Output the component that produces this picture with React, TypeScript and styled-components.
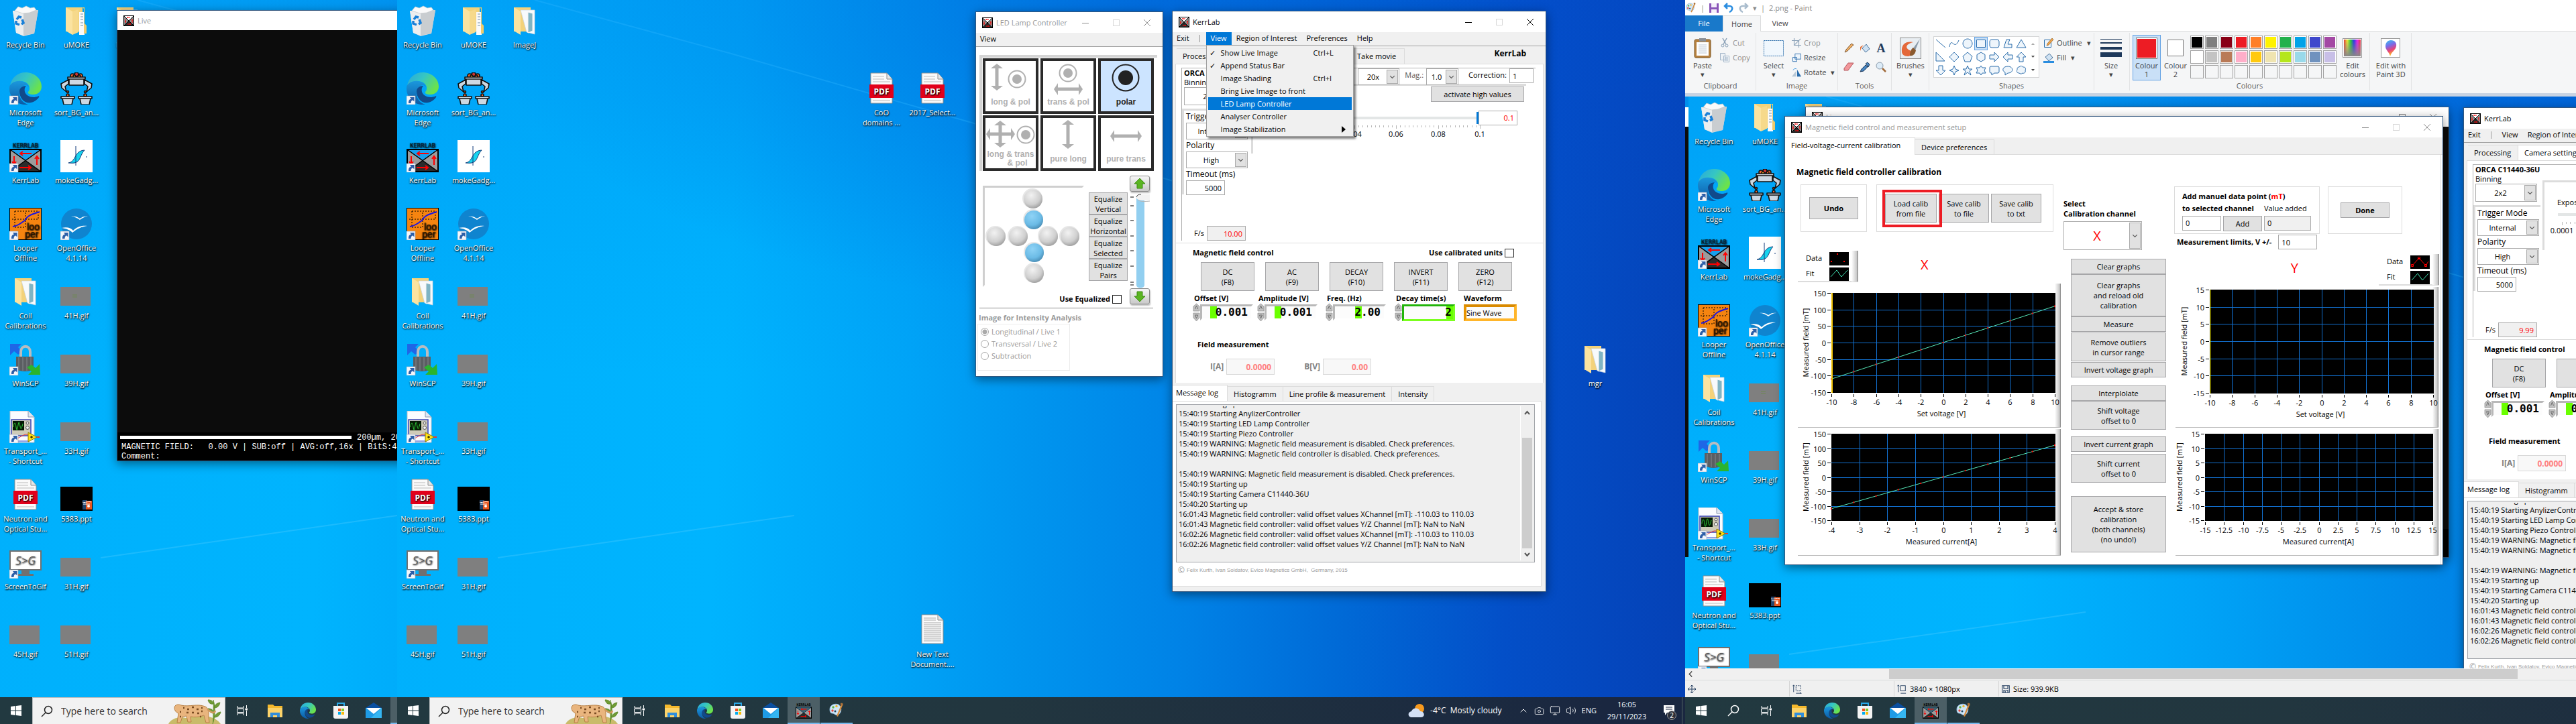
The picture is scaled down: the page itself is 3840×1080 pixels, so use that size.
import React, { ReactNode } from 'react';
import styled, { createGlobalStyle, css } from 'styled-components';
import { ChevronUp, Volume2, Monitor, Camera } from 'lucide-react';

/* ---------- base ---------- */

const ui = '"Open Sans", "Noto Sans", sans-serif';
const mono = '"Liberation Mono", monospace';
const digits = '"DejaVu Sans Mono", monospace';

const Global = createGlobalStyle`
  * { box-sizing: border-box; }
  html, body, #root { margin: 0; height: 100%; }
  body { font: 11px/14px ${ui}; color: #000; overflow: hidden; }
  button, input, select { font: inherit; color: inherit; margin: 0; padding: 0; border-radius: 0; }
  button { white-space: pre; cursor: default; }
  svg { display: block; flex: none; }
  fieldset { margin: 0; padding: 0; border: 0; min-width: 0; }
  h2, h3, p, ul { margin: 0; padding: 0; font: inherit; list-style: none; }
`;

const Screens = styled.main`
  display: grid;
  grid-template-columns: 592px 1920px minmax(0, 1fr);
  height: 100vh;
  min-height: 1080px;
`;

const Screen = styled.section`
  display: flex;
  flex-direction: column;
  min-width: 0;
  overflow: hidden;
`;

const wallpaper = css`
  background:
    radial-gradient(ellipse 1000px 460px at 58% 0, rgba(0, 60, 195, 0.34), rgba(0, 60, 195, 0)) 0 0 / 1920px 1080px,
    linear-gradient(180deg, rgba(0, 90, 220, 0.16) 0, rgba(0, 90, 220, 0) 560px) 0 0 / 1920px 1080px,
    linear-gradient(93deg, #00b0fc 0, #00b4fe 26%, #00a4f7 40%, #0094ee 50%, #0082e6 62%, #0069d6 74%, #034fc8 86%, #0541b6 100%) 0 0 / 1920px 1080px;
`;

const DesktopArea = styled.div`
  position: relative;
  flex: 1;
  min-height: 0;
  overflow: hidden;
  ${wallpaper}
`;

const Beams = styled.svg`
  position: absolute;
  inset: 0;
`;

const IconGrid = styled.div`
  position: relative;
  display: grid;
  grid-template-columns: repeat(auto-fill, 76px);
  grid-auto-rows: 101px;
`;

const DesktopIcon = styled.button<{ $col: number; $row: number }>`
  grid-column: ${(p) => p.$col};
  grid-row: ${(p) => p.$row};
  display: flex;
  flex-direction: column;
  align-items: center;
  gap: 4px;
  padding-top: 7px;
  border: 0;
  background: none;
  color: #fff;
  line-height: 15px;
  text-shadow: 1px 1px 2px #000, 0 1px 2px rgba(0, 0, 0, 0.7);
`;

/* ---------- drawings ---------- */

const Shortcut = () => (
  <g>
    <rect x="0" y="35" width="13" height="13" fill="#f4f6fa" stroke="#9aa6b8" strokeWidth=".6" />
    <path d="M3 46c0-4 1-6 4-6.500l-2-2.500h6.500v6.500l-2-2c-2 0-3 2-3 4.500z" fill="#2d5fa8" />
  </g>
);

const EdgeShape = () => (
  <>
    <defs>
      <linearGradient id="edgeA" x1="0" y1="0" x2="1" y2=".5">
        <stop offset="0" stopColor="#2aa7dc" /><stop offset=".5" stopColor="#35c6c4" /><stop offset="1" stopColor="#6be24c" />
      </linearGradient>
      <linearGradient id="edgeB" x1="0" y1="0" x2="0" y2="1">
        <stop offset="0" stopColor="#1b98dd" /><stop offset="1" stopColor="#0c59a4" />
      </linearGradient>
    </defs>
    <path d="M1 20C3 7 13 0 24 0c14 0 24 10 24 21 0 8-6 12-12 12-7 0-9-2-8-4 2-2 2-4 2-6 0-6-7-10-13-10C10 13 4 16 1 20z" fill="url(#edgeA)" />
    <path d="M1 19c4-5 10-7 16-6 7 1 12 5 12 10 0-2-3-4-5-4-5 1-9 6-9 13 0 8 6 14 13 16-16 2-28-10-28-24 0-2 0-3 1-5z" fill="url(#edgeB)" />
    <path d="M15 28c0 11 8 19 17 17 6-1 10-5 12-8 1-1 0-2-1-1.500C35 39 25 36 23 29c-1-4 0-7 2-9-6 0-10 4-10 8z" fill="#114a8b" />
  </>
);

const KerrShape = () => (
  <>
    <rect x="1" y="14" width="46" height="33" fill="#9c9c9c" />
    <path d="M1 14h46L24 31z" fill="#18a0ee" />
    <path d="M1 47h46L24 31z" fill="#2b2b2b" />
    <path d="M1 14l46 33M47 14L1 47" stroke="#000" strokeWidth="1.500" />
    <rect x="1" y="14" width="46" height="33" fill="none" stroke="#000" strokeWidth="2" />
    <path d="M33 20H17m3-3-4 3 4 3M7 24v11m-3-3 3 4 3-4M41 37V26m-3 2 3-4 3 4M15 41h16m-3-3 4 3-4 3" stroke="#f00" strokeWidth="2" fill="none" />
  </>
);

const FolderShape = ({ papers }: { papers?: boolean }) => (
  <>
    <path d="M8 4h25v36H8z" fill="#f3d27a" />
    {papers ? (
      <>
        <path d="M18 8h21v36l-12-3z" fill="#f8fafc" stroke="#c9d3dc" strokeWidth=".7" />
        <path d="M29 11l7 2v26l-7 3z" fill="#7fb4c4" stroke="#f5f5f5" />
      </>
    ) : (
      <>
        <path d="M28 11h8v34h-8z" fill="#fafafa" />
        <path d="M30 14h4m-4 4h4m-4 4h4m-4 5h4m-4 4h4" stroke="#7791a8" />
        <path d="M33 4h3l0 24 3 3v12h-4V6z" fill="#f0cb6b" />
      </>
    )}
    <path d="M8 4l10 6v35L8 39z" fill="#fbe3a0" />
    {!papers && <path d="M18 10l9-3v34l-9 4z" fill="#f6d98b" />}
  </>
);

const gray = <rect x="0" y="17" width="45" height="28" fill="#7f7f7f" />;

const pictures: Record<string, ReactNode> = {
  bin: (
    <>
      <path d="M5 9l38-1-6 35-16 4-11-5z" fill="#d9dcde" />
      <path d="M5 9l16 3 0 34-11-4z" fill="#eceeef" />
      <path d="M43 8l-22 4 0 34 16-3z" fill="#c9cdd0" />
      <path d="M8 9l5-6 6 2 6-3 6 3 6-1 3 4-10 4-10 1z" fill="#fafafa" stroke="#c4c8ca" strokeWidth=".7" />
      <path d="M11 22l3-4 4 1M19 22l2 5-3 2M15 30l-5-2 0-4" stroke="#1a80d8" strokeWidth="3.500" fill="none" />
    </>
  ),
  folder: <FolderShape />,
  papers: <FolderShape papers />,
  edge: (<><EdgeShape /><Shortcut /></>),
  sort: (
    <g stroke="#111" strokeWidth="1.600" strokeLinejoin="round">
      <g fill="#f0662b">
        <circle cx="18" cy="5" r="3" /><circle cx="24" cy="3" r="3" fill="#d13434" /><circle cx="30" cy="5" r="3" /><circle cx="21" cy="6" r="2" fill="#f5a623" /><circle cx="28" cy="6" r="2" />
        <circle cx="11" cy="29" r="1.500" /><circle cx="37" cy="29" r="1.500" /><circle cx="11" cy="34" r="2" /><circle cx="37" cy="34" r="2" />
      </g>
      <path d="M11 7h26v3H11zM13 10h22v9H13zM12 11L1 17l1 6 7 6-2-8 5-4zM36 11l11 6-1 6-7 6 2-8-5-4zM1 36h20v3H1zM3 39h16l-2 9H5zM27 36h20v3H27zM29 39h16l-2 9H31z" fill="#cdd8e2" />
    </g>
  ),
  kerr: (
    <>
      <text x="24" y="11" textAnchor="middle" fontFamily="DejaVu Sans Mono" fontSize="9" fill="#0b1a28">KERRLAB</text>
      <KerrShape /><Shortcut />
    </>
  ),
  moke: (
    <>
      <rect width="48" height="48" fill="#fff" />
      <path d="M12 34c12-2 8-18 24-19-6 6-6 15-12 18-4 2-8 1-12 1z" fill="#18d4ee" stroke="#123a7a" />
      <path d="M23 9v29M39 24v2" stroke="#123a7a" />
    </>
  ),
  looper: (
    <>
      <rect x=".5" y=".5" width="47" height="47" fill="#f58410" stroke="#000" />
      <path d="M8 5h35v12H3M8 5v24h16V5" stroke="#000" strokeDasharray="2 2" fill="none" />
      <path d="M5 28c8-1 10-4 18-9 4-8 12-10 22-13" stroke="#1d16e0" strokeWidth="2" fill="none" />
      <text x="26" y="33" fontFamily="Liberation Sans" fontSize="14" fill="#2a1500">loo</text>
      <text x="23" y="44" fontFamily="Liberation Sans" fontSize="14" fill="#2a1500">per</text>
      <Shortcut />
    </>
  ),
  office: (
    <>
      <circle cx="24" cy="24" r="23" fill="#0f84cf" />
      <path d="M16 13c5-1 9 0 13 3 4-3 8-4 12-3-5 0-8 2-12 5-4-3-8-5-13-5zM2 30c8-2 14 0 17 4 6-6 13-8 21-7-8 1-15 4-22 10-4-4-9-6-16-7z" fill="#fff" />
      <Shortcut />
    </>
  ),
  gif: gray,
  gifMark: (<>{gray}<path d="M18 29h7m-7 3h7" stroke="#6f8a52" /></>),
  winscp: (
    <>
      <path d="M1 1h17l-5 5 6 6-6 5-6-5-6 6z" fill="#1f66e6" />
      <path d="M17 22v-9c0-11 14-11 14 0v9" fill="none" stroke="#b9bcc0" strokeWidth="4" />
      <path d="M10 20h26v19c-8 4-18 4-26 0z" fill="#5b5e62" />
      <path d="M14 21v19M20 21v20M26 21v20M32 21v19" stroke="#85898d" />
      <path d="M46 47H28l5-5-7-6 7-4 6 5 6-6z" fill="#2bb42d" />
      <Shortcut />
    </>
  ),
  transport: (
    <>
      <path d="M1 0h27l9 9v38H1z" fill="#fbfcff" stroke="#b8bfcc" />
      <path d="M28 0v9h9" fill="#dfe6f2" stroke="#8a97ad" />
      <rect x="3" y="13" width="29" height="24" fill="#cfcbb8" stroke="#3c46b8" strokeWidth="1.500" />
      <rect x="5" y="15" width="17" height="14" fill="#051a05" />
      <path d="M6 24c1-8 3-8 4 0s2 4 3-3 2-4 3 2 2 4 4-4" stroke="#31d13b" fill="none" />
      <circle cx="27" cy="18" r="2" fill="#f5f5f5" stroke="#555" /><circle cx="27" cy="25" r="2.500" fill="#f5f5f5" stroke="#555" />
      <path d="M8 42c10-2 14-10 22-6" stroke="#e33" fill="none" /><path d="M12 45h18" stroke="#2846c8" />
      <path d="M28 32v14l13-7z" fill="#ffe11a" stroke="#8c7a00" /><path d="M31 39h4m-2-2v4" stroke="#000" /><path d="M41 39h4" stroke="#e33" strokeWidth="2" />
      <Shortcut />
    </>
  ),
  pdf: (
    <>
      <path d="M8 1h24l8 9v36H8z" fill="#fafafa" stroke="#8d8d8d" />
      <path d="M32 1v9h8" fill="#e6e6e6" stroke="#8d8d8d" />
      <path d="M11 6h17M11 10h17M11 14h26M11 42h26" stroke="#bbb" />
      <rect x="6" y="18" width="36" height="20" fill="#e2001a" />
      <text x="24" y="33" textAnchor="middle" fontFamily="Open Sans" fontWeight="700" fontSize="12" fill="#fff">PDF</text>
    </>
  ),
  ppt: (
    <>
      <rect y="12" width="48" height="36" fill="#000" />
      <rect x="33" y="32" width="7" height="14" fill="#23446c" /><rect x="38" y="33" width="9" height="13" fill="#e8551d" />
      <path d="M33 35c4 2 8-2 13 0M34 38h10" stroke="#fff" /><circle cx="42" cy="41" r="2" fill="#fff" />
    </>
  ),
  stg: (
    <>
      <rect x="1" y="7" width="46" height="28" fill="#fff" stroke="#707070" strokeWidth="2" />
      <text x="24" y="27" textAnchor="middle" fontFamily="Open Sans" fontStyle="italic" fontWeight="300" fontSize="17" fill="#444">S&gt;G</text>
      <path d="M18 36h12v5h6v3H13v-3h5z" fill="#707070" />
      <Shortcut />
    </>
  ),
  txt: (
    <>
      <path d="M8 1h24l8 8v35H8z" fill="#fbfbfb" stroke="#8d8d8d" />
      <path d="M32 1v8h8" fill="#e3e3e3" stroke="#8d8d8d" />
      <path d="M11 6h18M11 9h18M11 13h26M11 16h26M11 19h26M11 22h26M11 25h26M11 28h26M11 31h26M11 34h26M11 37h26M11 40h26" stroke="#a9a9a9" />
    </>
  ),
};

const Picture = ({ name }: { name: string }) => (
  <svg width="48" height="48" viewBox="0 0 48 48" aria-hidden="true">{pictures[name]}</svg>
);

type IconSpec = [label: string, picture: string, col: number, row: number];

const commonIcons: IconSpec[] = [
  ['Recycle Bin', 'bin', 1, 1],
  ['Microsoft\nEdge', 'edge', 1, 2],
  ['KerrLab', 'kerr', 1, 3],
  ['Looper\nOffline', 'looper', 1, 4],
  ['Coil\nCalibrations', 'papers', 1, 5],
  ['WinSCP', 'winscp', 1, 6],
  ['Transport_...\n- Shortcut', 'transport', 1, 7],
  ['Neutron and\nOptical Stu...', 'pdf', 1, 8],
  ['ScreenToGif', 'stg', 1, 9],
  ['45H.gif', 'gif', 1, 10],
  ['uMOKE', 'folder', 2, 1],
  ['sort_BG_an...', 'sort', 2, 2],
  ['mokeGadg...', 'moke', 2, 3],
  ['OpenOffice\n4.1.14', 'office', 2, 4],
  ['41H.gif', 'gifMark', 2, 5],
  ['39H.gif', 'gif', 2, 6],
  ['33H.gif', 'gif', 2, 7],
  ['5383.ppt', 'ppt', 2, 8],
  ['31H.gif', 'gif', 2, 9],
  ['51H.gif', 'gif', 2, 10],
  ['ImageJ', 'papers', 3, 1],
];

const farIcons: IconSpec[] = [
  ['CoO\ndomains ...', 'pdf', 10, 2],
  ['2017_Select...', 'pdf', 11, 2],
  ['New Text\nDocument....', 'txt', 11, 10],
  ['mgr', 'papers', 24, 6],
];

const Desktop = ({ extra = [], children }: { extra?: IconSpec[]; children?: ReactNode }) => (
  <DesktopArea>
    <Beams width="1920" height="1040" aria-hidden="true">
      <path d="M205 0L498 80 860 184 1143 266 1330 322" stroke="#2bb4ff" strokeOpacity=".35" strokeWidth="2" fill="none" />
      <path d="M150 832L592 769" stroke="#5cd0ff" strokeOpacity=".3" strokeWidth="2" fill="none" />
    </Beams>
    <IconGrid>
      {[...commonIcons, ...extra].map(([label, picture, col, row]) => (
        <DesktopIcon key={label} type="button" $col={col} $row={row}>
          <Picture name={picture} />
          <span>{label}</span>
        </DesktopIcon>
      ))}
    </IconGrid>
    {children}
  </DesktopArea>
);

/* ---------- window parts ---------- */

const WindowFrame = styled.section<{ $x: number; $y: number; $w: number; $h?: number; $bg?: string }>`
  position: absolute;
  left: ${(p) => p.$x}px;
  top: ${(p) => p.$y}px;
  width: ${(p) => p.$w}px;
  ${(p) => p.$h && `height: ${p.$h}px;`}
  display: flex;
  flex-direction: column;
  background: ${(p) => p.$bg ?? '#fff'};
  border: 1px solid #31567e;
  box-shadow: 0 4px 14px rgba(0, 0, 0, 0.45);
`;

const TitleBar = styled.header<{ $dim?: boolean; $h?: number }>`
  display: flex;
  align-items: center;
  flex: none;
  height: ${(p) => p.$h ?? 31}px;
  padding-left: 9px;
  background: #fff;
  color: ${(p) => (p.$dim ? '#999' : '#000')};
  h2 { flex: 1; padding-left: 5px; white-space: nowrap; }
`;

const Caption = styled.button`
  display: grid;
  place-items: center;
  width: 46px;
  height: 100%;
  border: 0;
  background: none;
`;

const AppGlyph = () => (
  <svg width="16" height="16" viewBox="0 0 16 16" aria-hidden="true">
    <rect width="16" height="16" fill="#8e8e8e" />
    <path d="M0 0h16L8 8z" fill="#fff" /><path d="M0 16h16L8 8z" fill="#2a2a2a" />
    <path d="M0 0l16 16M16 0L0 16" stroke="#000" />
    <rect x=".5" y=".5" width="15" height="15" fill="none" stroke="#000" />
    <path d="M10 3H5.500M3 6v5M13 11V6M6 13h5M6 2v2M2 9h2M12 7h2M10 12v2" stroke="#f00" />
  </svg>
);

const Title = ({ text, dim, h, max = '#d8d8d8' }: { text: string; dim?: boolean; h?: number; max?: string }) => {
  const ink = dim ? '#8a8a8a' : '#000';
  return (
    <TitleBar $dim={dim} $h={h}>
      <AppGlyph />
      <h2>{text}</h2>
      <Caption type="button" aria-label="Minimise"><svg width="10" height="10"><path d="M0 5.500h10" stroke={ink} /></svg></Caption>
      <Caption type="button" aria-label="Maximise"><svg width="10" height="10"><rect x=".5" y=".5" width="9" height="9" fill="none" stroke={max} /></svg></Caption>
      <Caption type="button" aria-label="Close"><svg width="10" height="10"><path d="M0 0l10 10M10 0L0 10" stroke={ink} /></svg></Caption>
    </TitleBar>
  );
};

const MenuBar = styled.nav`
  display: flex;
  flex: none;
  height: 21px;
  background: #f0f0f0;
  border-bottom: 1px solid #a0a0a0;
  > button:first-child { padding-left: 6px; }
`;

const MenuSlot = styled.div`
  position: relative;
`;

const MenuButton = styled.button<{ $open?: boolean }>`
  height: 20px;
  padding: 0 7px 2px;
  border: 0;
  background: ${(p) => (p.$open ? '#0078d7' : 'none')};
  color: ${(p) => (p.$open ? '#fff' : '#000')};
`;

const MenuRule = styled.span`
  width: 1px;
  height: 11px;
  margin: 4px 9px 0 8px;
  background: #999;
`;

const Dropdown = styled.ul`
  position: absolute;
  z-index: 5;
  left: 0;
  top: 19px;
  width: 220px;
  padding: 1px 2px 1px;
  background: #f0f0f0;
  border: 1px solid #a0a0a0;
  box-shadow: 3px 3px 3px rgba(0, 0, 0, 0.5);
`;

const DropItem = styled.button<{ $on?: boolean }>`
  display: grid;
  grid-template-columns: 17px 1fr 55px;
  align-items: center;
  width: 100%;
  height: 19px;
  padding: 0 2px;
  border: 0;
  text-align: left;
  background: ${(p) => (p.$on ? '#0078d7' : 'none')};
  color: ${(p) => (p.$on ? '#fff' : '#000')};
`;

const SubArrow = styled.svg`
  margin-left: auto;
  margin-right: 7px;
`;

const Push = styled.button<{ $w?: number; $h?: number; $bold?: boolean; $mt?: number }>`
  flex: none;
  ${(p) => p.$w && `width: ${p.$w}px;`}
  height: ${(p) => p.$h ?? 23}px;
  margin-top: ${(p) => p.$mt ?? 0}px;
  border: 1px solid #a6a6a8;
  background: #e1e1e1;
  line-height: 15px;
  font-weight: ${(p) => (p.$bold ? 700 : 400)};
`;

const Field = styled.input<{ $w: number; $h?: number; $red?: boolean; $gray?: boolean; $right?: boolean; $bold?: boolean; $pull?: number }>`
  flex: none;
  width: ${(p) => p.$w}px;
  height: ${(p) => p.$h ?? 22}px;
  padding: 0 4px;
  margin-left: ${(p) => p.$pull ?? 0}px;
  border: 1px solid #ababab;
  background: ${(p) => (p.$gray ? '#f0f0f0' : '#fff')};
  color: ${(p) => (p.$red ? '#f00' : '#000')};
  text-align: ${(p) => (p.$right ? 'right' : 'left')};
  font-weight: ${(p) => (p.$bold ? 700 : 400)};
  &:disabled { border-color: #d8d8d8; background: #f8f8f8; color: #ff8080; }
`;

const SelectBox = styled.div<{ $w: number; $h: number }>`
  display: grid;
  grid-template-columns: 1fr 17px;
  flex: none;
  width: ${(p) => p.$w}px;
  height: ${(p) => p.$h}px;
  padding: 1px;
  border: 1px solid #ababab;
  background: #fff;
  svg { grid-area: 1 / 2; width: 100%; height: 100%; background: #e1e1e1; border: 1px solid #ababab; pointer-events: none; }
  select { grid-area: 1 / 1 / 2 / 3; appearance: none; border: 0; background: none; padding-right: 17px; text-align: center; text-align-last: center; min-width: 0; }
`;

const BigSelect = styled(SelectBox)`
  select { color: #f00; font-size: 20px; }
`;

const Chevron = () => (
  <svg viewBox="0 0 16 20" aria-hidden="true"><path d="M4.500 8.500L8 12l3.500-3.500" fill="none" stroke="#555" strokeWidth="1.200" /></svg>
);

const Tick = styled.input`
  appearance: none;
  flex: none;
  width: 14px;
  height: 13px;
  border: 1px solid #222;
  background: #fff;
`;

const TickLabel = styled.label`
  display: flex;
  align-items: center;
  gap: 3px;
  font-weight: 700;
`;

const bevel = css`
  border-top: 3px solid #dcdcdc;
  border-left: 3px solid #dcdcdc;
`;

/* ---------- live view ---------- */

const LiveBody = styled.div`
  flex: 1;
  background: #0c0c0c;
`;

const LiveStatus = styled.div`
  flex: none;
  height: 42px;
  padding-left: 6px;
  background: #000;
  color: #fff;
  font: 12px/14px ${mono};
  white-space: pre;
`;

const ScaleRow = styled.div`
  display: flex;
  align-items: center;
  gap: 8px;
  height: 15px;
  margin-left: -2px;
  &::before { content: ''; width: 345px; height: 5px; background: #fff; }
`;

const LiveWindow = ({ bare }: { bare?: boolean }) => (
  <WindowFrame $x={174} $y={15} $w={960} $h={673} aria-label="Live">
    <Title text="Live" dim h={29} max="#8a8a8a" />
    <LiveBody />
    <LiveStatus>
      {!bare && (
        <>
          <ScaleRow>200µm, 20x</ScaleRow>
          <div>{'MAGNETIC FIELD:   0.00 V | SUB:off | AVG:off,16x | BitS:4.0'}</div>
          <div>Comment:</div>
        </>
      )}
    </LiveStatus>
  </WindowFrame>
);

/* ---------- LED lamp controller ---------- */

const LedBody = styled.div`
  padding: 12px 14px 1px 5px;
`;

const ModeGrid = styled.div`
  display: grid;
  grid-template-columns: repeat(3, 83px);
  gap: 2px 3px;
  width: 265px;
  padding: 1px 0 0 1px;
  border-top: 4px solid #d4d4d4;
  border-left: 4px solid #d4d4d4;
`;

const ModeButton = styled.button<{ $on?: boolean }>`
  display: flex;
  flex-direction: column;
  height: 83px;
  border: 4px solid #2a2a2a;
  background: ${(p) => (p.$on ? '#cce4ff' : '#fff')};
  color: ${(p) => (p.$on ? '#222' : '#b0b0b0')};
  font: 700 12px/13px "Liberation Sans", sans-serif;
  text-align: center;
  svg { overflow: visible; }
  span { width: 100%; margin: auto 0; }
`;

const ArrowV = ({ x, y1, y2 }: { x: number; y1: number; y2: number }) => (
  <path d={`M${x} ${y1}l9 7h-6.500V${y2 - 7}h6.500l-9 7-9-7h6.500V${y1 + 7}h-6.500z`} fill="currentColor" />
);
const ArrowH = ({ x1, x2, y }: { x1: number; x2: number; y: number }) => (
  <path d={`M${x1} ${y}l6-9v6.500H${x2 - 6}v-6.500l6 9-6 9v-6.500H${x1 + 6}v6.500z`} fill="currentColor" />
);
const Target = ({ x, y, big }: { x: number; y: number; big?: boolean }) => (
  <>
    <circle cx={x} cy={y} r={big ? 19.5 : 12.5} fill="none" stroke="currentColor" strokeWidth="2" />
    <circle cx={x} cy={y} r={big ? 11 : 7} fill="currentColor" />
  </>
);

const modes: [string, ReactNode][] = [
  ['long & pol', <><ArrowV x={17} y1={4} y2={44} /><Target x={47} y={27} /></>],
  ['trans & pol', <><Target x={37} y={18} /><ArrowH x1={16} x2={59} y={42} /></>],
  ['polar', <Target x={37} y={25} big />],
  ['long & trans\n      & pol', <><ArrowV x={22} y1={4} y2={44} /><ArrowH x1={1} x2={44} y={24} /><Target x={60} y={25} /></>],
  ['pure long', <ArrowV x={37} y1={3} y2={46} />],
  ['pure trans', <ArrowH x1={14} x2={61} y={27} />],
];

const LedRow = styled.div`
  display: grid;
  grid-template-columns: 217px 34px;
  margin: 7px 0 0 5px;
  gap: 2px;
`;

const LedPair = styled.div`
  display: flex;
  gap: 7px;
  padding-top: 15px;
`;

const EqStack = styled.div`
  display: flex;
  flex-direction: column;
  padding-top: 10px;
`;

const EqualRow = styled.div`
  display: flex;
  justify-content: flex-end;
  padding: 11px 10px 0 0;
`;

const Lift = styled.div`
  display: flex;
  flex-direction: column;
  justify-content: space-between;
`;

const LiftButton = styled.button`
  width: 30px;
  height: 24px;
  padding: 1px 5px;
  border: 1px solid #8a8a8a;
  border-radius: 3px;
  background: linear-gradient(#f6f6f6, #c9c9c9);
  box-shadow: 1px 2px 2px rgba(0, 0, 0, 0.25);
`;

const Group = styled.fieldset`
  margin-top: 5px;
  padding: 6px 4px 0 3px;
  border-top: 1px solid #888;
  color: #9a9a9a;
`;

const GroupTitle = styled.h3`
  font-weight: 700;
  line-height: 16px;
  margin-left: -4px;
`;

const RadioBox = styled.div`
  width: 138px;
  height: 70px;
  margin: 1px 0 0 -6px;
  padding: 2px 4px;
  border: 1px solid #ececec;
`;

const RadioLabel = styled.label`
  display: flex;
  align-items: center;
  gap: 4px;
  height: 18px;
`;

const Radio = styled.input`
  appearance: none;
  width: 12px;
  height: 12px;
  border: 1px solid #aaa;
  border-radius: 50%;
  &:checked { background: radial-gradient(#aaa 3px, #fff 4px); }
`;

const bulbs: [number, number, boolean][] = [
  [75, 20, false], [76, 51, true], [20, 76, false], [53, 76, false], [98, 76, false], [130, 76, false], [77, 100, true], [77, 131, false],
];

const BulbPanel = () => (
  <svg width="151" height="151" aria-label="Lamp layout">
    <defs>
      <radialGradient id="off" cx=".4" cy=".3" r=".8"><stop offset="0" stopColor="#f2f2f2" /><stop offset=".6" stopColor="#cfcfcf" /><stop offset="1" stopColor="#8f8f8f" /></radialGradient>
      <radialGradient id="on" cx=".4" cy=".3" r=".8"><stop offset="0" stopColor="#8fd3f6" /><stop offset=".6" stopColor="#6bbbe6" /><stop offset="1" stopColor="#3f7fa6" /></radialGradient>
    </defs>
    <path d="M0 0h151l-3 3H3v145l-3 3z" fill="#cfcfcf" />
    {bulbs.map(([x, y, on]) => (
      <g key={`${x}-${y}`}>
        <circle cx={x - 1} cy={y - 1} r="15" fill="#e6e6e6" />
        <circle cx={x} cy={y} r="14" fill={`url(#${on ? 'on' : 'off'})`} />
      </g>
    ))}
  </svg>
);

const GreenArrow = ({ down }: { down?: boolean }) => (
  <svg width="18" height="18" viewBox="0 0 18 18" aria-hidden="true">
    <path d={down ? 'M9 17L1 9h4V2h8v7h4z' : 'M9 1l8 8h-4v7H5V9H1z'} fill="#5bb522" stroke="#3b8a10" />
  </svg>
);

const LedWindow = () => (
  <WindowFrame $x={862} $y={17} $w={280} $h={545} aria-label="LED Lamp Controller">
    <Title text="LED Lamp Controller" dim />
    <MenuBar><MenuButton type="button">View</MenuButton></MenuBar>
    <LedBody>
      <ModeGrid>
        {modes.map(([label, art], i) => (
          <ModeButton key={label} type="button" $on={i === 2}>
            <svg width="75" height="47" aria-hidden="true">{art}</svg>
            <span>{label}</span>
          </ModeButton>
        ))}
      </ModeGrid>
      <LedRow>
        <div>
          <LedPair>
            <BulbPanel />
            <EqStack>
              {['Vertical', 'Horizontal', 'Selected', 'Pairs'].map((name) => (
                <Push key={name} type="button" $w={58} $h={33}>{`Equalize\n${name}`}</Push>
              ))}
            </EqStack>
          </LedPair>
          <EqualRow><TickLabel>Use Equalized<Tick type="checkbox" /></TickLabel></EqualRow>
        </div>
        <Lift>
          <LiftButton type="button" aria-label="Brighter"><GreenArrow /></LiftButton>
          <svg width="34" height="144" aria-hidden="true">
            <path d="M1 8h5M1 21h5M1 43h5M1 66h5M1 88h5M1 111h5M1 135h5M1 139h5" stroke="#000" />
            <path d="M10 8h12v131c0 6-12 6-12 0z" fill="#92cff0" />
            <path d="M10 9c1-4 4-5 8-5h12v9H20c-5 0-9-1-10-4z" fill="#f2f2f2" /><path d="M10 8c1-3 3-4 7-4" stroke="#444" fill="none" /><path d="M12 12c4 3 10 3 18 2" stroke="#b5b5b5" fill="none" />
          </svg>
          <LiftButton type="button" aria-label="Dimmer"><GreenArrow down /></LiftButton>
        </Lift>
      </LedRow>
      <Group disabled>
        <GroupTitle>Image for Intensity Analysis</GroupTitle>
        <RadioBox>
          {['Longitudinal / Live 1', 'Transversal / Live 2', 'Subtraction'].map((name, i) => (
            <RadioLabel key={name}><Radio type="radio" name="analysis" defaultChecked={i === 0} />{name}</RadioLabel>
          ))}
        </RadioBox>
      </Group>
    </LedBody>
  </WindowFrame>
);

/* ---------- KerrLab ---------- */

const TopTabs = styled.div`
  display: grid;
  grid-template-columns: 75px 1fr 80px 210px;
  flex: none;
  height: 26px;
  padding: 3px 0 0 6px;
`;

const TopTab = styled.button<{ $on?: boolean }>`
  border: 1px solid #dcdcdc;
  border-width: 1px 1px 0 0;
  padding-left: 9px;
  text-align: left;
  background: ${(p) => (p.$on ? '#fff' : '#f0f0f0')};
`;

const Brand = styled.strong`
  justify-self: end;
  padding: 1px 29px 0 0;
  font-size: 12px;
`;

const CameraPanel = styled.div`
  flex: none;
  height: 268px;
  margin: 0 3px 0 4px;
  padding: 5px 11px 3px 8px;
  border: 1px solid #dcdcdc;
  background: #fff;
`;

const CameraFrame = styled.div`
  display: grid;
  grid-template-columns: 100px minmax(0, 1fr);
  gap: 3px;
  height: 258px;
  border-top: 1px solid #b0b0b0;
  border-left: 1px solid #b0b0b0;
  white-space: nowrap;
`;

const Stack = styled.div<{ $pl?: number }>`
  display: flex;
  flex-direction: column;
  padding-left: ${(p) => p.$pl ?? 0}px;
`;

const Bold = styled.strong`
  font-weight: 700;
`;

const TriggerGroup = styled.div`
  ${bevel}
  display: flex;
  flex-direction: column;
  gap: 2px;
  height: 128px;
  margin-top: 5px;
  padding: 2px 0 0 3px;
  label { font-size: 12px; }
`;

const RateRow = styled.div`
  display: flex;
  align-items: center;
  gap: 4px;
  padding: 47px 0 0 18px;
`;

const OpticsRow = styled.div`
  display: flex;
  justify-content: flex-end;
  align-items: flex-start;
  gap: 4px;
  height: 23px;
  padding-right: 3px;
  label { line-height: 20px; margin-left: 4px; }
  label:nth-of-type(1) { color: #555; }
  label:nth-of-type(2) { margin-left: 11px; }
`;

const ExposureGroup = styled.div`
  ${bevel}
  width: 410px;
  height: 104px;
`;

const ExposureHead = styled.div`
  display: flex;
  justify-content: space-between;
  height: 37px;
  padding: 1px 3px 0 19px;
  label { align-self: flex-end; }
`;

const SliderRow = styled.div`
  display: flex;
  align-items: center;
  height: 21px;
  padding-left: 20px;
`;

const Slider = styled.input`
  appearance: none;
  width: 324px;
  height: 20px;
  background: linear-gradient(#e3e6e6, #e3e6e6) center / 100% 4px no-repeat;
  &::-webkit-slider-thumb { appearance: none; width: 11px; height: 18px; background: #0078d7; }
`;

const MagneticPanel = styled.div`
  flex: none;
  height: 208px;
  margin: 0 3px 0 4px;
  padding: 5px 0 0 25px;
  border: 1px solid #dcdcdc;
  border-width: 0 1px;
  background: #fff;
`;

const MagneticHead = styled.div`
  display: flex;
  justify-content: space-between;
  align-items: center;
  height: 18px;
  padding-right: 43px;
`;

const FnRow = styled.div`
  display: grid;
  grid-template-columns: repeat(5, 80px);
  gap: 16px;
  padding: 5px 0 0 12px;
`;

const ControlRow = styled.div`
  display: grid;
  grid-template-columns: 96px 102px 103px 103px 80px;
  padding-top: 4px;
`;

const ControlCell = styled.div`
  display: grid;
  grid-template-columns: 11px 80px;
  label { grid-column: 1 / 3; font-weight: 700; }
  label:only-of-type { padding-left: 2px; }
`;

const spots: Record<string, string> = { offset: '12px', amplitude: '12px', freq: '30px', decay: '63px' };

const Counter = styled.input<{ $tone?: string; $spot: string }>`
  width: 79px;
  height: ${(p) => (p.$tone ? 25 : 24)}px;
  margin-top: 2px;
  padding: 0 ${(p) => (p.$tone ? 2 : 5)}px 2px 0;
  border: 3px solid #fff;
  border-top-color: ${(p) => p.$tone ?? '#b8b8b8'};
  border-left-color: ${(p) => p.$tone ?? '#b8b8b8'};
  ${(p) => p.$tone && `border-color: ${p.$tone} #7bff1e #7bff1e ${p.$tone};`}
  background: linear-gradient(#6aff00, #6aff00) ${(p) => p.$spot} 0 / 10px 100% no-repeat #fcfcfc;
  font: 700 16px/16px ${digits};
  text-align: right;
`;

const Wave = styled.input`
  width: 79px;
  height: 25px;
  border: 4px solid #ffb52a;
  border-top-color: #d98a00;
  border-left-color: #e89400;
  background: #fcfcfc;
`;

const WaveCell = styled.div`
  display: flex;
  flex-direction: column;
  gap: 2px;
  label { font-weight: 700; }
`;

const Readings = styled.div`
  display: flex;
  align-items: center;
  gap: 4px;
  padding: 14px 0 0 26px;
  color: #808080;
  label { font: 700 12px/16px ${ui}; }
  input { font-size: 12px; }
  label + input + label { margin-left: 40px; }
`;

const FieldTitle = styled.h3`
  padding: 27px 0 0 7px;
  font-weight: 700;
`;

const LogTabs = styled.div`
  display: flex;
  align-items: flex-end;
  flex: none;
  height: 27px;
`;

const LogTab = styled.button<{ $on?: boolean }>`
  height: ${(p) => (p.$on ? 24 : 22)}px;
  padding: ${(p) => (p.$on ? '0 13px 2px 5px' : '0 9px')};
  border: 1px solid #dcdcdc;
  border-width: 1px 1px 0 0;
  background: ${(p) => (p.$on ? '#fff' : '#f0f0f0')};
`;

const LogPanel = styled.div`
  flex: none;
  width: 550px;
  height: 277px;
  padding: 4px 9px 0 5px;
  border: 1px solid #dcdcdc;
  border-left: 0;
  background: #fff;
`;

const LogBox = styled.div`
  display: grid;
  grid-template-columns: minmax(0, 1fr) 19px;
  height: 236px;
  padding: 2px;
  border: 1px solid #a0a3a8;
  background: #efefef;
`;

const LogText = styled.div`
  display: flex;
  flex-direction: column;
  justify-content: flex-end;
  min-height: 0;
  padding: 0 0 17px 1px;
  overflow: hidden;
  line-height: 15px;
  p { flex: none; height: 15px; }
`;

const Scroll = styled.div`
  display: grid;
  grid-template-rows: 47px 165px 1fr;
  justify-items: center;
  border-left: 1px solid #fff;
  svg { margin-top: 5px; }
`;

const ScrollThumb = styled.div`
  width: 15px;
  background: #cdcdcd;
`;

const Copyright = styled.p`
  display: flex;
  align-items: center;
  gap: 3px;
  padding: 5px 0 0 3px;
  color: #9c9c9c;
  font: 8px/14px "Liberation Sans", sans-serif;
  b { font: 12px/14px ${ui}; }
`;

const logLines = [
  '15:40:19 Image processor started.',
  '15:40:19 Starting AnylizerController',
  '15:40:19 Starting LED Lamp Controller',
  '15:40:19 Starting Piezo Controller',
  '15:40:19 WARNING: Magnetic field measurement is disabled. Check preferences.',
  '15:40:19 WARNING: Magnetic field controller is disabled. Check preferences.',
  '',
  '15:40:19 WARNING: Magnetic field measurement is disabled. Check preferences.',
  '15:40:19 Starting up',
  '15:40:19 Starting Camera C11440-36U',
  '15:40:20 Starting up',
  '16:01:43 Magnetic field controller: valid offset values XChannel [mT]: -110.03 to 110.03',
  '16:01:43 Magnetic field controller: valid offset values Y/Z Channel [mT]: NaN to NaN',
  '16:02:26 Magnetic field controller: valid offset values XChannel [mT]: -110.03 to 110.03',
  '16:02:26 Magnetic field controller: valid offset values Y/Z Channel [mT]: NaN to NaN',
];

const viewMenu: [string, string, ReactNode][] = [
  ['✓', 'Show Live Image', 'Ctrl+L'],
  ['✓', 'Append Status Bar', ''],
  ['', 'Image Shading', 'Ctrl+I'],
  ['', 'Bring Live Image to front', ''],
  ['', 'LED Lamp Controller', ''],
  ['', 'Analyser Controller', ''],
  ['', 'Image Stabilization', <SubArrow key="sub" width="6" height="10"><path d="M0 0l6 5-6 5z" /></SubArrow>],
];

const counters: [string, string, string, string?][] = [
  ['Offset [V]', '0.001', 'offset'],
  ['Amplitude [V]', '0.001', 'amplitude'],
  ['Freq. (Hz)', '2.00', 'freq'],
  ['Decay time(s)', '2', 'decay', '#22b40a'],
];

const Spinner = () => (
  <svg width="11" height="28" viewBox="0 0 11 28" aria-hidden="true">
    <path d="M1 12V5l4.500-4L10 5v7zM1 15h9v7l-4.500 5L1 22z" fill="#c0c0c0" stroke="#8a8a8a" strokeWidth=".7" />
    <path d="M3.500 9l2-5 2 5M3.500 18l2 5 2-5z" stroke="#555" fill="none" strokeWidth=".8" />
  </svg>
);

const exposureMarks = ['0.0001', '0.02', '0.04', '0.06', '0.08', '0.1'];

const ExposureScale = () => (
  <svg width="404" height="26" fontSize="11" textAnchor="middle" aria-hidden="true">
    {Array.from({ length: 51 }, (_, i) => (
      <path key={i} d={`M${Math.round(26 + i * 6.24) + 0.5} 1v${i % 10 ? 3 : 5}`} stroke="#b8b8b8" />
    ))}
    {exposureMarks.map((m, i) => <text key={m} x={26 + Math.round(i * 62.4)} y="18">{m}</text>)}
  </svg>
);

const KerrWindow = ({ id, rate, menuOpen }: { id: string; rate: string; menuOpen?: boolean }) => {
  const combo = (name: string, value: string, w: number, h = 25) => (
    <SelectBox $w={w} $h={h}>
      <Chevron />
      <select id={`${id}-${name}`} aria-label={name} defaultValue={value}><option>{value}</option></select>
    </SelectBox>
  );
  return (
    <WindowFrame $x={1155} $y={16} $w={558} $h={867} $bg="#f0f0f0" aria-label="KerrLab">
      <Title text="KerrLab" />
      <MenuBar>
        <MenuButton type="button">Exit</MenuButton>
        <MenuRule />
        <MenuSlot>
          <MenuButton type="button" $open={menuOpen}>View</MenuButton>
          {menuOpen && (
            <Dropdown>
              {viewMenu.map(([mark, name, hint]) => (
                <li key={name}>
                  <DropItem type="button" $on={name === 'LED Lamp Controller'}><span>{mark}</span><span>{name}</span><span>{hint}</span></DropItem>
                </li>
              ))}
            </Dropdown>
          )}
        </MenuSlot>
        {['Region of Interest', 'Preferences', 'Help'].map((m) => <MenuButton key={m} type="button">{m}</MenuButton>)}
      </MenuBar>
      <TopTabs>
        <TopTab type="button">Processing</TopTab>
        <TopTab type="button" $on>Camera settings</TopTab>
        <TopTab type="button">Take movie</TopTab>
        <Brand>KerrLab</Brand>
      </TopTabs>
      <CameraPanel>
        <CameraFrame>
          <div>
            <Stack $pl={3}>
              <Bold>ORCA C11440-36U</Bold>
              <label htmlFor={`${id}-binning`}>Binning</label>
              {combo('binning', '2x2', 92, 27)}
            </Stack>
            <TriggerGroup>
              <label htmlFor={`${id}-trigger`}>Trigger Mode</label>
              {combo('trigger', 'Internal', 92)}
              <label htmlFor={`${id}-polarity`}>Polarity</label>
              {combo('polarity', 'High', 92)}
              <label htmlFor={`${id}-timeout`}>Timeout (ms)</label>
              <Field id={`${id}-timeout`} $w={58} $right defaultValue="5000" />
            </TriggerGroup>
            <RateRow>
              <label htmlFor={`${id}-rate`}>F/s</label>
              <Field id={`${id}-rate`} $w={58} $red $gray $right readOnly value={rate} />
            </RateRow>
          </div>
          <div>
            <OpticsRow>
              {combo('objective', '20x', 62)}
              <label htmlFor={`${id}-mag`}>Mag.:</label>
              {combo('mag', '1.0', 48)}
              <label htmlFor={`${id}-corr`}>Correction:</label>
              <Field id={`${id}-corr`} $w={36} defaultValue="1" />
            </OpticsRow>
            <ExposureGroup>
              <ExposureHead>
                <label htmlFor={`${id}-exp`}>Exposure time in seconds</label>
                <Push type="button" $w={139}>activate high values</Push>
              </ExposureHead>
              <SliderRow>
                <Slider id={`${id}-exp`} type="range" min="0.0001" max="0.1" step="0.0001" defaultValue="0.1" />
                <Field aria-label="Exposure value" $w={58} $red $right $pull={-8} defaultValue="0.1" />
              </SliderRow>
              <ExposureScale />
            </ExposureGroup>
          </div>
        </CameraFrame>
      </CameraPanel>
      <MagneticPanel>
        <MagneticHead>
          <Bold>Magnetic field control</Bold>
          <TickLabel>Use calibrated units<Tick type="checkbox" /></TickLabel>
        </MagneticHead>
        <FnRow>
          {['DC\n(F8)', 'AC\n(F9)', 'DECAY\n(F10)', 'INVERT\n(F11)', 'ZERO\n(F12)'].map((b) => <Push key={b} type="button" $h={43}>{b}</Push>)}
        </FnRow>
        <ControlRow>
          {counters.map(([label, value, key, tone]) => (
            <ControlCell key={key}>
              <label htmlFor={`${id}-${key}`}>{label}</label>
              <Spinner />
              <Counter id={`${id}-${key}`} $tone={tone} $spot={spots[key]} defaultValue={value} />
            </ControlCell>
          ))}
          <WaveCell>
            <label htmlFor={`${id}-wave`}>Waveform</label>
            <Wave id={`${id}-wave`} defaultValue="Sine Wave" />
          </WaveCell>
        </ControlRow>
        <FieldTitle>Field measurement</FieldTitle>
        <Readings>
          <label htmlFor={`${id}-ia`}>I[A]</label>
          <Field id={`${id}-ia`} $w={72} $h={24} $right $bold disabled value="0.0000" readOnly />
          <label htmlFor={`${id}-bv`}>B[V]</label>
          <Field id={`${id}-bv`} $w={72} $h={24} $right $bold disabled value="0.00" readOnly />
        </Readings>
      </MagneticPanel>
      <LogTabs>
        <LogTab type="button" $on>Message log</LogTab>
        <LogTab type="button">Histogramm</LogTab>
        <LogTab type="button">Line profile &amp; measurement</LogTab>
        <LogTab type="button">Intensity</LogTab>
      </LogTabs>
      <LogPanel>
        <LogBox>
          <LogText>{logLines.map((line, i) => <p key={i}>{line}</p>)}</LogText>
          <Scroll>
            <svg width="9" height="9"><path d="M1 7l3.500-4L8 7" stroke="#555" strokeWidth="2" fill="none" /></svg>
            <ScrollThumb />
            <svg width="9" height="9"><path d="M1 2l3.500 4L8 2" stroke="#555" strokeWidth="2" fill="none" /></svg>
          </Scroll>
        </LogBox>
        <Copyright><b>©</b>Felix Kurth, Ivan Soldatov, Evico Magnetics GmbH,&nbsp; Germany, 2015</Copyright>
      </LogPanel>
    </WindowFrame>
  );
};

/* ---------- magnetic field setup ---------- */

const SetupTabs = styled.div`
  display: flex;
  align-items: flex-end;
  flex: none;
  height: 26px;
  background: #f0f0f0;
  border-bottom: 1px solid #dcdcdc;
`;

const SetupTab = styled.button<{ $on?: boolean; $w: number }>`
  width: ${(p) => p.$w}px;
  height: ${(p) => (p.$on ? 26 : 22)}px;
  margin-bottom: ${(p) => (p.$on ? -1 : 0)}px;
  padding: 0 0 ${(p) => (p.$on ? 3 : 0)}px 9px;
  border: 1px solid #dcdcdc;
  border-width: 1px 1px 0 0;
  text-align: left;
  background: ${(p) => (p.$on ? '#fff' : '#f0f0f0')};
`;

const SetupGrid = styled.div`
  display: grid;
  grid-template-columns: 394px 154px 402px;
  column-gap: 4px;
  flex: 1;
  margin-right: 2px;
  padding-left: 17px;
  border-right: 1px solid #dcdcdc;
  white-space: nowrap;
  > :last-child { padding-left: 7px; }
`;

const SetupTitle = styled.h3`
  padding-top: 16px;
  font: 700 12px/20px ${ui};
`;

const BoxRow = styled.div<{ $top: number; $gap: number; $pl?: number }>`
  display: flex;
  gap: ${(p) => p.$gap}px;
  padding: ${(p) => p.$top}px 0 0 ${(p) => p.$pl ?? 0}px;
`;

const Box = styled.div<{ $w: number }>`
  display: flex;
  align-items: center;
  justify-content: center;
  gap: 3px;
  width: ${(p) => p.$w}px;
  height: 71px;
  border: 1px solid #dcdcdc;
`;

const FileBox = styled(Box)`
  justify-content: flex-start;
  padding-left: 12px;
`;

const Marked = styled.div`
  position: relative;
  &::after { content: ''; position: absolute; inset: -6px -8px -7px -4px; border: 4px solid #ed1c24; z-index: 1; }
`;

const LegendRow = styled.div<{ $top: number; $flip?: boolean }>`
  display: flex;
  flex-direction: ${(p) => (p.$flip ? 'row-reverse' : 'row')};
  height: 47px;
  margin: ${(p) => p.$top}px 0 1px;
`;

const Letter = styled.span<{ $side: number }>`
  margin: 6px ${(p) => p.$side}px 0;
  color: #f00;
  font-size: 20px;
  line-height: 30px;
`;

const Legend = ({ dots }: { dots?: boolean }) => (
  <svg width="92" height="47" aria-label="Legend" fontSize="11">
    <text x="14" y="15">Data</text><text x="14" y="38">Fit</text>
    <rect x="49" y="2" width="29" height="20" /><rect x="49" y="25" width="29" height="20" />
    {dots
      ? <path d="M51 16h2M60 5h2M70 16h2" stroke="#f00" strokeWidth="2" />
      : <g stroke="#f00" fill="none"><path d="M52 17L62 6l10 11 4-6" /><path d="M50.500 15.500h3v3h-3zM60.500 4.500h3v3h-3zM70.500 15.500h3v3h-3z" /></g>}
    <path d="M51 39l9-10 7 10 9-10" stroke="#40e0b0" fill="none" />
    <path d="M2 46h90" stroke="#b8b8b8" /><rect x="82" y="0" width="10" height="46" fill="url(#shade)" />
  </svg>
);

const ChartBox = styled.svg`
  overflow: visible;
`;

type ChartProps = {
  height: number; plot: [number, number, number, number];
  xt: string[]; yt: string[]; xTitle: string; titleX: number;
  trace?: string[]; cursor?: string;
};

const Chart = ({ height, plot, xt, yt, xTitle, titleX, trace, cursor }: ChartProps) => {
  const [x, y, w, h] = plot;
  const px = (i: number) => Math.round(x + (w * i) / (xt.length - 1)) + 0.5;
  const py = (i: number) => Math.round(y + (h * i) / (yt.length - 1)) + 0.5;
  const at = (t: number): [number, number] => [x + w * t, y + h * (0.5 - (t - 0.5) * 0.734)];
  return (
    <ChartBox width="394" height={height} fontSize="11" aria-label={xTitle}>
      <defs>
        <linearGradient id="shade"><stop offset="0" stopColor="#fff" /><stop offset=".8" stopColor="#c8c8c8" /><stop offset="1" stopColor="#7a7a7a" /></linearGradient>
      </defs>
      <rect x="385" y="1" width="9" height={height - 3} fill="url(#shade)" />
      <path d={`M2 ${height - 1.5}h392`} stroke="#b8b8b8" />
      <rect x={x} y={y} width={w + 1} height={h + 1} fill="#000" />
      {xt.map((t, i) => (
        <g key={t}>
          {i > 0 && i < xt.length - 1 && <path d={`M${px(i)} ${y}v${h + 1}`} stroke="#1272d4" />}
          <path d={`M${px(i)} ${y + h + 3}v4`} stroke="#000" />
          <text x={px(i)} y={y + h + 19} textAnchor="middle">{t}</text>
        </g>
      ))}
      {yt.map((t, i) => (
        <g key={t}>
          {i > 0 && i < yt.length - 1 && <path d={`M${x} ${py(i)}h${w + 1}`} stroke="#1272d4" />}
          <path d={`M${x - 6} ${py(i)}h5`} stroke="#000" />
          <text x={x - 8} y={py(i) + 4} textAnchor="end">{t}</text>
        </g>
      ))}
      {trace && <path d={`M${at(0).join(' ')}L${at(1).join(' ')}`} stroke="#55e6b8" />}
      {trace?.map((t, i) => {
        const [cx, cy] = at(i / (trace.length - 1));
        return <rect key={t} x={cx - 1} y={cy - 1} width="2" height="2" fill="#f00" />;
      })}
      {cursor && <path d={`M${x + 1} ${y}v${h + 1}`} stroke={cursor} strokeWidth={trace ? 2 : 1} />}
      <text x={titleX} y={y + h + 36} textAnchor="middle">{xTitle}</text>
      <text transform={`translate(${x - 34} ${y + h / 2}) rotate(-90)`} textAnchor="middle">Measured field [mT]</text>
    </ChartBox>
  );
};

const big = ['150', '100', '50', '0', '-50', '-100', '-150'];
const small = ['15', '10', '5', '0', '-5', '-10', '-15'];
const volts = ['-10', '-8', '-6', '-4', '-2', '0', '2', '4', '6', '8', '10'];
const amps = ['-4', '-3', '-2', '-1', '0', '1', '2', '3', '4'];
const wideAmps = ['-15', '-12.5', '-10', '-7.5', '-5', '-2.5', '0', '2.5', '5', '7.5', '10', '12.5', '15'];

const Channel = styled.div`
  padding: 65px 0 13px;
  line-height: 15px;
  font-weight: 700;
  label { display: block; white-space: pre; margin-bottom: 4px; }
  select { font-weight: 400; }
`;

const ActionStack = styled.div`
  display: flex;
  flex-direction: column;
  padding-left: 11px;
`;

const PointBox = styled.div`
  display: grid;
  grid-template-columns: 58px 58px 70px;
  column-gap: 3px;
  width: 217px;
  height: 71px;
  padding: 6px 0 0 11px;
  border: 1px solid #dcdcdc;
  line-height: 15px;
  label:first-child { grid-column: 1 / 4; font-weight: 700; }
  em { color: #f00; font-style: normal; }
`;

const SubLabel = styled.strong`
  grid-column: 1 / 3;
`;

const LimitRow = styled.div`
  display: flex;
  align-items: center;
  gap: 10px;
  padding: 1px 0 0 4px;
  font-weight: 700;
`;

const actions: [string, number, number][] = [
  ['Clear graphs', 23, 0], ['Clear graphs\nand reload old\ncalibration', 63, 0], ['Measure', 23, 0],
  ['Remove outliers\nin cursor range', 43, 1], ['Invert voltage graph', 23, 1], ['Interplolate', 23, 12],
  ['Shift voltage\noffset to 0', 43, 0], ['Invert current graph', 23, 10], ['Shift current\noffset to 0', 43, 3],
  ['Accept & store\ncalibration\n(both channels)\n(no undo!)', 84, 20],
];

const SetupWindow = () => (
  <WindowFrame $x={143} $y={29} $w={982} $h={670} aria-label="Magnetic field control and measurement setup">
    <Title text="Magnetic field control and measurement setup" dim />
    <SetupTabs>
      <SetupTab type="button" $on $w={194}>Field-voltage-current calibration</SetupTab>
      <SetupTab type="button" $w={118}>Device preferences</SetupTab>
    </SetupTabs>
    <SetupGrid>
      <div>
        <SetupTitle>Magnetic field controller calibration</SetupTitle>
        <BoxRow $top={8} $gap={14} $pl={6}>
          <Box $w={99}><Push type="button" $w={73} $h={33} $bold>Undo</Push></Box>
          <FileBox $w={264}>
            <Marked><Push type="button" $w={77} $h={43}>{'Load calib\nfrom file'}</Push></Marked>
            <Push type="button" $w={75} $h={43}>{'Save calib\nto file'}</Push>
            <Push type="button" $w={75} $h={43}>{'Save calib\nto txt'}</Push>
          </FileBox>
        </BoxRow>
        <LegendRow $top={28}><Legend dots /><Letter $side={93}>X</Letter></LegendRow>
        <Chart height={217} plot={[52, 15, 333, 148]} xt={volts} yt={big} xTitle="Set voltage [V]" titleX={216} trace={volts} cursor="#f0c000" />
        <Chart height={191} plot={[52, 8, 333, 129]} xt={amps} yt={big} xTitle="Measured current[A]" titleX={216} trace={volts} />
      </div>
      <div>
        <Channel>
          <label htmlFor="channel">{'Select\nCalibration channel'}</label>
          <BigSelect $w={117} $h={43}><Chevron /><select id="channel" defaultValue="X"><option>X</option></select></BigSelect>
        </Channel>
        <ActionStack>
          {actions.map(([label, h, mt], i) => <Push key={i} type="button" $w={142} $h={h} $mt={mt}>{label}</Push>)}
        </ActionStack>
      </div>
      <div>
        <BoxRow $top={47} $gap={12}>
          <PointBox>
            <label htmlFor="point">Add manuel data point (<em>mT</em>)</label>
            <SubLabel>to selected channel</SubLabel>
            <label htmlFor="added">Value added</label>
            <Field id="point" $w={58} defaultValue="0" />
            <Push type="button" $w={58}>Add</Push>
            <Field id="added" $w={70} $gray readOnly value="0" />
          </PointBox>
          <Box $w={111}><Push type="button" $w={73} $bold>Done</Push></Box>
        </BoxRow>
        <LimitRow><label htmlFor="limit">Measurement limits, V +/-</label><Field id="limit" $w={58} defaultValue="10" /></LimitRow>
        <LegendRow $top={7} $flip><Legend /><Letter $side={118}>Y</Letter></LegendRow>
        <Chart height={212} plot={[53, 5, 333, 154]} xt={volts} yt={small} xTitle="Set voltage [V]" titleX={218} cursor="#e8e000" />
        <Chart height={191} plot={[46, 8, 339, 129]} xt={wideAmps} yt={small} xTitle="Measured current[A]" titleX={215} />
      </div>
    </SetupGrid>
  </WindowFrame>
);

/* ---------- paint ---------- */

const PaintTitle = styled.header`
  display: flex;
  align-items: center;
  gap: 6px;
  flex: none;
  height: 23px;
  background: #fff;
  color: #8a8a8a;
`;

const PaintTabs = styled.div`
  display: flex;
  flex: none;
  height: 24px;
  background: #fff;
  border-bottom: 1px solid #dadbdc;
`;

const PaintTab = styled.button<{ $kind: 'file' | 'on' | 'off' }>`
  width: ${(p) => (p.$kind === 'file' ? 56 : 57)}px;
  margin-bottom: -1px;
  border: ${(p) => (p.$kind === 'on' ? '1px solid #dadbdc' : '0')};
  border-bottom: 0;
  background: ${(p) => ({ file: '#1979ca', on: '#f5f6f7', off: 'none' })[p.$kind]};
  color: ${(p) => (p.$kind === 'file' ? '#fff' : '#444')};
`;

const Ribbon = styled.div`
  display: flex;
  flex: none;
  height: 97px;
  padding: 2px 0 8px;
  background: #f5f6f7;
  border-bottom: 5px solid #c8d3e2;
  color: #444;
  white-space: nowrap;
`;

const RibbonGroup = styled.section<{ $w: number }>`
  display: flex;
  flex-direction: column;
  flex: none;
  width: ${(p) => p.$w}px;
  height: 86px;
  border-right: 1px solid #e2e3e4;
  h3 { text-align: center; line-height: 14px; color: #5a5a5a; margin-top: auto; }
`;

const GroupBody = styled.div<{ $gap?: number; $pl?: number }>`
  display: flex;
  gap: ${(p) => p.$gap ?? 6}px;
  height: 70px;
  padding: 4px 0 0 ${(p) => p.$pl ?? 8}px;
`;

const Tall = styled.button<{ $on?: boolean; $w: number }>`
  display: flex;
  flex-direction: column;
  align-items: center;
  flex: none;
  width: ${(p) => p.$w}px;
  height: 68px;
  margin-top: -1px;
  padding-top: 2px;
  border: 1px solid ${(p) => (p.$on ? '#62a2e4' : 'transparent')};
  background: ${(p) => (p.$on ? '#c9e0f7' : 'none')};
  line-height: 13px;
  svg { height: 34px; margin-bottom: 2px; }
`;

const Column = styled.div`
  display: flex;
  flex-direction: column;
`;

const Small = styled.button<{ $off?: boolean }>`
  display: flex;
  align-items: center;
  gap: 4px;
  height: 22px;
  border: 0;
  background: none;
  color: ${(p) => (p.$off ? '#8d8d8d' : '#444')};
`;

const ToolGrid = styled.div`
  display: grid;
  grid-template-columns: repeat(3, 24px);
  grid-auto-rows: 28px;
  padding-top: 5px;
`;

const IconButton = styled.button`
  display: grid;
  place-items: center;
  border: 0;
  background: none;
`;

const ShapeBox = styled.div`
  display: grid;
  grid-template-columns: repeat(7, 20px) 15px;
  grid-template-rows: repeat(3, 20px);
  width: 158px;
  height: 62px;
  margin-top: 1px;
  border: 1px solid #d5d6d7;
  background: #fff;
`;

const ShapeButton = styled(IconButton)<{ $on?: boolean }>`
  border: ${(p) => (p.$on ? '1px solid #62a2e4' : '0')};
  background: ${(p) => (p.$on ? '#c9e0f7' : 'none')};
`;

const Palette = styled.div`
  display: grid;
  grid-template-columns: repeat(10, 20px);
  grid-auto-rows: 20px;
  gap: 2px;
`;

const Swatch = styled.button<{ $c?: string }>`
  border: 1px solid #a0a0a0;
  background: ${(p) => p.$c ?? '#f5f6f7'};
  box-shadow: inset 0 0 0 1px #fff;
  ${(p) => !p.$c && 'box-shadow: none;'}
`;

const PaintCanvas = styled.div`
  display: flex;
  flex: 1;
  min-height: 0;
  overflow: hidden;
`;

const Sliver = styled.div`
  flex: none;
  width: 5px;
  height: 100%;
  padding-top: 16px;
  background: linear-gradient(#0090ec, #00b0fc 60%, #00b4fb);
  &::before { content: ''; display: block; height: 29px; background: #fff; }
  &::after { content: ''; display: block; height: 642px; background: #0c0c0c; }
`;

const PaintScroll = styled.div`
  display: flex;
  align-items: center;
  flex: none;
  height: 17px;
  padding-left: 4px;
  background: #f0f0f0;
  div { width: 937px; height: 15px; margin-left: 291px; background: #cdcdcd; }
`;

const StatusBar = styled.footer`
  display: flex;
  flex: none;
  height: 26px;
  padding: 1px 0;
  background: #f0f0f0;
  border-top: 1px solid #dadbdc;
`;

const StatusCell = styled.div`
  display: flex;
  align-items: center;
  gap: 5px;
  width: 156px;
  padding-left: 4px;
  border-right: 1px solid #d5d5d5;
  &:last-child { border: 0; }
`;

const navy = '#1e395b';
const outline = { fill: '#eef5fb', stroke: '#2a6cab', strokeWidth: 1 };

const shapes = [
  'M1 2l14 12', 'M1 13C4-4 8 20 15 3', 'M8 1a7 7 0 1 0 .1 0z', 'M1.500 2.500h13v11h-13z', 'M4 2h8q3 0 3 3v6q0 3-3 3H4q-3 0-3-3V5q0-3 3-3z', 'M2 14l4-12h5l-3 7h6v5z', 'M8 2l7 12H1z',
  'M1 1v13h13z', 'M8 1l7 7-7 7-7-7z', 'M8 1l7 6-3 8H4L1 7z', 'M8 1l6 3.500v7L8 15l-6-3.500v-7z', 'M1 5h7V1l7 7-7 7v-4H1z', 'M15 5H8V1L1 8l7 7v-4h7z', 'M5 15V8H1l7-7 7 7h-4v7z',
  'M5 1v7H1l7 7 7-7h-4V1z', 'M8 1l2 5 5 2-5 2-2 5-2-5-5-2 5-2z', 'M8 1l2 5h5l-4 3 2 6-5-4-5 4 2-6-4-3h5z', 'M8 1l2 3h5l-2 4 2 4h-5l-2 3-2-3H1l2-4-2-4h5z', 'M3 2h10q2 0 2 2v6q0 2-2 2H8l-4 3v-3H3q-2 0-2-2V4q0-2 2-2z', 'M8 2c9 0 9 10 0 10l-4 3v-4C-2 8 1 2 8 2z', 'M5 3c3-3 4-1 6 0 4 0 4 3 3 5 1 3-2 5-4 4-2 2-4 1-5 0-4 0-4-3-3-5 0-2 0-4 3-4z',
];

const palette = [
  '#000000', '#7f7f7f', '#880015', '#ed1c24', '#ff7f27', '#fff200', '#22b14c', '#00a2e8', '#3f48cc', '#a349a4',
  '#ffffff', '#c3c3c3', '#b97a57', '#ffaec9', '#ffc90e', '#efe4b0', '#b5e61d', '#99d9ea', '#7092be', '#c8bfe7',
];

const tools: [string, ReactNode][] = [
  ['Pencil', <path d="M2 14l2-4 8-9 3 2-9 9z" fill="#f3b46a" stroke="#7a5430" />],
  ['Fill', <><path d="M4 8l6-6 5 7-6 5z" fill="#cfe2f3" stroke="#48729c" /><path d="M1 12V6l5-3-3 4z" fill="#e2703a" /></>],
  ['Text', <text x="8" y="14" textAnchor="middle" fontFamily="Liberation Serif" fontWeight="700" fontSize="18" fill={navy}>A</text>],
  ['Eraser', <path d="M1 10l6-8h8l-6 8-2 3H1z" fill="#f2969a" stroke="#b45a5e" />],
  ['Colour picker', <path d="M1 15l2-4 6-6 3 3-6 6zM9 3l3-2 3 3-2 4z" fill="#4b87c0" stroke={navy} />],
  ['Magnifier', <><circle cx="6" cy="6" r="5" fill="#dcebf7" stroke="#8a9aaa" /><path d="M10 10l5 5" stroke="#a06a3a" strokeWidth="2.500" /></>],
];

const Glyph = ({ children, s = 16 }: { children: ReactNode; s?: number }) => (
  <svg width={s} height={s} viewBox="0 0 16 16" fill="none" aria-hidden="true">{children}</svg>
);

const Down = () => <span>▾</span>;

const PaletteShape = () => (
  <>
    <path d="M2 10C2 3 10 1 15 3c5 3 5 12 0 15-5 2-6-2-9-2s-4-2-4-6z" fill="#cfe6f7" stroke="#8ab4d4" />
    <circle cx="6" cy="12" r="1.700" fill="#e3473d" /><circle cx="7" cy="7" r="1.700" fill="#62b34a" /><circle cx="12" cy="5.500" r="1.700" fill="#f2b32c" /><circle cx="10" cy="13" r="1.500" fill="#20455f" />
    <path d="M19 3l2 1-7 17-2-1z" fill="#d98b3a" /><path d="M18 1c3-1 5 1 3 4l-3-1z" fill="#a9713b" />
  </>
);

const Paint = () => (
  <>
    <PaintTitle>
      <svg width="17" height="18" viewBox="0 0 24 24" aria-hidden="true"><PaletteShape /></svg>
      <span>|</span>
      <Glyph><path d="M1 1h14v14H1z" fill="#8a55b8" /><path d="M4 1h8v6H4zM4 10h8v5H4z" fill="#f4effa" /></Glyph>
      <Glyph><path d="M3 5h6q5 0 4 5-1 3-4 4M6 1L2 5l4 4" stroke="#2a8de0" strokeWidth="2.500" /></Glyph>
      <Glyph><path d="M13 5H7Q2 5 3 10q1 3 4 4M10 1l4 4-4 4" stroke="#a9bccd" strokeWidth="2.500" /></Glyph>
      <span>▾</span><span>|</span>
      <h2>2.png - Paint</h2>
    </PaintTitle>
    <PaintTabs>
      <PaintTab type="button" $kind="file">File</PaintTab>
      <PaintTab type="button" $kind="on">Home</PaintTab>
      <PaintTab type="button" $kind="off">View</PaintTab>
    </PaintTabs>
    <Ribbon>
      <RibbonGroup $w={106}>
        <GroupBody $pl={7}>
          <Tall type="button" $w={38}>
            <svg width="26" height="34"><rect x="1" y="4" width="24" height="27" rx="2" fill="#b5803e" stroke="#7c5520" /><path d="M4 8h18v20H4z" fill="#fff" /><path d="M7 12h12M7 15h12M7 18h12M7 21h12M7 24h12" stroke="#b9c4d0" /><path d="M8 2h10v5H8z" fill="#8b8f95" /></svg>
            Paste<Down />
          </Tall>
          <Column>
            <Small type="button" $off><Glyph><path d="M5 1l5 9M11 1L6 10" stroke="#8ca2b8" strokeWidth="1.500" /><circle cx="5" cy="12" r="2" stroke="#8ca2b8" /><circle cx="11" cy="12" r="2" stroke="#8ca2b8" /></Glyph>Cut</Small>
            <Small type="button" $off><Glyph><path d="M1.500 1.500h7v10h-7zM6.500 5.500h8v9h-8z" fill="#eef2f6" stroke="#a3b6c9" /><path d="M8 8h5M8 10h5M8 12h5" stroke="#a3b6c9" /></Glyph>Copy</Small>
          </Column>
        </GroupBody>
        <h3>Clipboard</h3>
      </RibbonGroup>
      <RibbonGroup $w={122}>
        <GroupBody $pl={5}>
          <Tall type="button" $w={42}>
            <svg width="32" height="34"><rect x="1.500" y="5.500" width="29" height="23" fill="#f0f7fd" stroke="#2a6cab" strokeDasharray="2 1" /></svg>
            Select<Down />
          </Tall>
          <Column>
            <Small type="button" $off><Glyph s={14}><path d="M4 0v12h12M0 4h12v12M5 11L15 1" stroke="#8ca2b8" strokeWidth="1.300" /></Glyph>Crop</Small>
            <Small type="button"><Glyph s={14}><path d="M5.500 1.500h10v9h-10zM1.500 7.500h7v7h-7z" fill="#eef5fb" stroke="#2a6cab" /></Glyph>Resize</Small>
            <Small type="button"><Glyph s={14}><path d="M0 15h7V6z" fill="#b8c8d6" /><path d="M9 15h7L9 3z" fill="#2a6cab" /><path d="M2 4q3-4 6-2" stroke="#2a8de0" /></Glyph>Rotate <Down /></Small>
          </Column>
        </GroupBody>
        <h3>Image</h3>
      </RibbonGroup>
      <RibbonGroup $w={80}>
        <GroupBody $pl={4}>
          <ToolGrid>{tools.map(([name, art]) => <IconButton key={name} type="button" aria-label={name}><Glyph>{art}</Glyph></IconButton>)}</ToolGrid>
        </GroupBody>
        <h3>Tools</h3>
      </RibbonGroup>
      <RibbonGroup $w={56}>
        <GroupBody $pl={5}>
          <Tall type="button" $w={46}>
            <svg width="33" height="34"><rect x=".5" y="1.500" width="31" height="31" fill="#e9eef2" stroke="#8a8a8a" /><path d="M3 22C2 10 10 6 20 8 8 11 8 17 15 20c5 3 2 9-3 9-6 0-9-3-9-7z" fill="#e4683a" /><path d="M30 3L20 17l3 3z" fill="#8a9aa8" /><path d="M20 16l4 4c-1 6-5 9-9 8 0-4 1-9 5-12z" fill="#8a5a30" /></svg>
            Brushes<Down />
          </Tall>
        </GroupBody>
      </RibbonGroup>
      <RibbonGroup $w={246}>
        <GroupBody $pl={6}>
          <ShapeBox>
            {shapes.map((d, i) => (
              <React.Fragment key={d}>
                <ShapeButton type="button" aria-label={`Shape ${i + 1}`} $on={i === 3}><Glyph><path d={d} {...outline} fill={i < 2 ? 'none' : outline.fill} /></Glyph></ShapeButton>
                {i % 7 === 6 && <IconButton type="button" aria-label="Scroll shapes"><svg width="5" height="4"><path d={i === 6 ? 'M0 4h5L2.500 1z' : 'M0 0h5L2.500 3z'} fill={i === 6 ? '#aaa' : '#444'} /></svg></IconButton>}
              </React.Fragment>
            ))}
          </ShapeBox>
          <Column>
            <Small type="button"><Glyph><path d="M1.500 3.500h10v11h-10z" stroke="#2a6cab" fill="#eef5fb" /><path d="M5 12l1-3 7-8 2 2-7 8z" fill="#f3a54a" stroke="#8a5a20" strokeWidth=".7" /></Glyph>Outline <Down /></Small>
            <Small type="button"><Glyph><path d="M0 13h16v3H0z" fill="#2a8de0" /><path d="M3 7l6-5 5 6-6 5z" fill="#cfe2f3" stroke="#48729c" /></Glyph>Fill <Down /></Small>
          </Column>
        </GroupBody>
        <h3>Shapes</h3>
      </RibbonGroup>
      <RibbonGroup $w={53}>
        <GroupBody $pl={4}>
          <Tall type="button" $w={42}>
            <svg width="32" height="34"><path d="M0 3h32v1H0zM0 8h32v2H0zM0 15h32v4H0zM0 23h32v7H0z" fill={navy} /></svg>
            Size<Down />
          </Tall>
        </GroupBody>
      </RibbonGroup>
      <RibbonGroup $w={358}>
        <GroupBody $pl={4} $gap={1}>
          <Tall type="button" $w={42} $on>
            <svg width="32" height="34"><rect x=".5" y="1.500" width="31" height="31" fill="#fff" stroke="#7a7a7a" /><rect x="2" y="3" width="28" height="28" fill="#ed1c24" /></svg>
            {'Colour\n1'}
          </Tall>
          <Tall type="button" $w={42}>
            <svg width="24" height="34"><rect x=".5" y="4.500" width="23" height="24" fill="#fff" stroke="#7a7a7a" /></svg>
            {'Colour\n2'}
          </Tall>
          <Palette>
            {Array.from({ length: 30 }, (_, i) => <Swatch key={i} type="button" aria-label={`Palette ${i + 1}`} $c={palette[i]} />)}
          </Palette>
          <Tall type="button" $w={46}>
            <svg width="30" height="34">
              <defs>
                <linearGradient id="hue"><stop offset="0" stopColor="#e33" /><stop offset=".2" stopColor="#ee3" /><stop offset=".4" stopColor="#2c3" /><stop offset=".6" stopColor="#23e" /><stop offset=".8" stopColor="#e2e" /><stop offset="1" stopColor="#e33" /></linearGradient>
                <linearGradient id="fade" x2="0" y2="1"><stop offset="0" stopColor="#888" stopOpacity="0" /><stop offset="1" stopColor="#888" /></linearGradient>
              </defs>
              <rect x=".5" y="2.500" width="28" height="28" fill="#fff" stroke="#999" /><rect x="2" y="4" width="25" height="25" fill="url(#hue)" /><rect x="2" y="4" width="25" height="25" fill="url(#fade)" />
            </svg>
            {'Edit\ncolours'}
          </Tall>
        </GroupBody>
        <h3>Colours</h3>
      </RibbonGroup>
      <RibbonGroup $w={62}>
        <GroupBody $pl={2}>
          <Tall type="button" $w={58}>
            <svg width="30" height="34">
              <defs><linearGradient id="drop" x2=".3" y2="1"><stop offset="0" stopColor="#35c8f0" /><stop offset=".4" stopColor="#7a6ae8" /><stop offset=".7" stopColor="#e8447a" /><stop offset="1" stopColor="#ffc020" /></linearGradient></defs>
              <rect x=".5" y="2.500" width="28" height="28" fill="#fff" stroke="#999" /><path d="M15 5c6 0 9 4 8 9-1 6-7 8-9 15-1-6-7-9-7-15 0-5 3-9 8-9z" fill="url(#drop)" />
            </svg>
            {'Edit with\nPaint 3D'}
          </Tall>
        </GroupBody>
      </RibbonGroup>
    </Ribbon>
    <PaintCanvas>
      <Sliver />
      <Desktop>
        <LiveWindow bare />
        <SetupWindow />
        <KerrWindow id="copy" rate="9.99" />
      </Desktop>
    </PaintCanvas>
    <PaintScroll><Glyph s={9}><path d="M11 1L4 8l7 7" stroke="#444" strokeWidth="2.500" /></Glyph><div /></PaintScroll>
    <StatusBar>
      <StatusCell><Glyph s={12}><path d="M8 0v16M0 8h16M5 3l3-3 3 3M5 13l3 3 3-3M3 5L0 8l3 3M13 5l3 3-3 3" stroke={navy} strokeWidth="1.300" /></Glyph></StatusCell>
      <StatusCell><Glyph s={14}><path d="M2 1v12M0 3l2-2 2 2M6 15h9M13 13l2 2-2 2" stroke={navy} /><rect x="6" y="2" width="8" height="9" stroke={navy} strokeDasharray="2 1" /></Glyph></StatusCell>
      <StatusCell><Glyph s={14}><path d="M2 1v12M0 3l2-2 2 2M6 15h9" stroke={navy} /><rect x="6" y="2" width="8" height="9" stroke={navy} /></Glyph>3840 × 1080px</StatusCell>
      <StatusCell><Glyph s={12}><path d="M1 1h14v14H1zM4 1v6h8V1M4 15v-5h8v5M7 12v3" stroke={navy} strokeWidth="1.400" /></Glyph>Size: 939.9KB</StatusCell>
    </StatusBar>
  </>
);

/* ---------- taskbar ---------- */

const Bar = styled.footer`
  display: flex;
  flex: none;
  height: 40px;
  background: linear-gradient(90deg, #223940 0, #22363f 900px, #1a2740 1800px);
  color: #fff;
`;

const BarButton = styled.button<{ $on?: boolean; $line?: boolean; $w?: number }>`
  display: grid;
  place-items: center;
  flex: none;
  width: ${(p) => p.$w ?? 48}px;
  margin-right: ${(p) => (p.$w ? 0 : 1)}px;
  padding: 0;
  border: 0;
  background: ${(p) => (p.$on ? '#4c5f66' : 'none')};
  ${(p) => (p.$on || p.$line) && 'box-shadow: inset 0 -2px #76b9ed;'}
`;

const Search = styled.label`
  display: flex;
  align-items: center;
  flex: none;
  width: 288px;
  padding-left: 12px;
  gap: 12px;
  background: #f2f2f2;
  border: 1px solid #b9bdbf;
  border-bottom: 0;
  input { width: 148px; border: 0; background: none; font-size: 14px; color: #333; }
  input::placeholder { color: #333; opacity: 1; }
`;

const Tray = styled.div`
  display: flex;
  align-items: center;
  gap: 8px;
  margin-left: auto;
  padding-right: 4px;
  white-space: nowrap;
`;

const Weather = styled.button`
  display: flex;
  align-items: center;
  gap: 7px;
  margin-right: 16px;
  border: 0;
  background: none;
  font-size: 12px;
`;

const Clock = styled.time`
  width: 70px;
  margin-left: 2px;
  text-align: center;
  line-height: 18px;
`;

const Notice = styled.button`
  position: relative;
  width: 40px;
  height: 40px;
  padding-left: 11px;
  border: 0;
  border-right: 1px solid #566;
  background: none;
  b { position: absolute; left: 17px; top: 20px; width: 14px; height: 14px; border-radius: 50%; border: 1px solid #999; background: #2b2f3a; font: 10px/12px ${ui}; text-align: center; }
`;

const Lens = ({ color }: { color: string }) => (
  <svg width="18" height="18" viewBox="0 0 18 18" fill="none" stroke={color} strokeWidth="1.500"><circle cx="11" cy="7" r="5.500" /><path d="M7 11l-6 6" /></svg>
);

const Jaguar = () => (
  <svg width="80" height="38" viewBox="0 0 80 38" aria-hidden="true">
    <path d="M0 38c4-8 16-12 26-9 12-4 20-4 34-2 8 2 14 5 18 11z" fill="#c9bb6a" />
    <path d="M66 38c4-12 4-24 1-36M67 8c-6 1-7-3-8-6 5 0 8 2 8 6zM68 14c6 0 8-4 9-8-5 1-8 3-9 8zM68 22c-6 0-8-4-9-7 5 0 8 2 9 7zM69 28c5 0 8-4 9-8-5 1-8 3-9 8z" fill="#6f9c35" stroke="#5d8a2a" />
    <path d="M9 14c0-5 6-6 10-4 12 3 24-3 36 2 6 3 5 10 5 16l1 8h-5l-3-11c-8 3-14 3-20 2l1 8h-5l-2-9-6 1-3 9h-5l2-14c-3-1-6-4-6-8z" fill="#e9b57e" stroke="#b98145" />
    <path d="M58 16c6 4 10 8 12 2" stroke="#d29a5c" strokeWidth="2.500" fill="none" />
    <path d="M22 14h2m4 2h3m4-3h3m4 3h3m4-2h2m-24 7h3m5 0h3m5 1h3m3-3h2m-4 8h2m-32-7h2m-2 7h2" stroke="#7a4c22" strokeWidth="2.500" />
  </svg>
);

const apps: [string, ReactNode][] = [
  ['File Explorer', <><path d="M1 3h8l2 2h12v17H1z" fill="#f5b92d" /><path d="M1 8h22v14H1z" fill="#fcd36a" /><path d="M5 22v-7h14v7h-4v-3H9v3z" fill="#2f8ddb" /></>],
  ['Microsoft Edge', <g transform="scale(.5)"><EdgeShape /></g>],
  ['Store', <><path d="M1 5h22v16q0 3-3 3H4q-3 0-3-3z" fill="#f4f4f4" /><path d="M7 5V1h10v4" stroke="#2aa9e8" strokeWidth="2" fill="none" /><path d="M8 9h4v4H8z" fill="#f1511b" /><path d="M13 9h4v4h-4z" fill="#80cc28" /><path d="M8 14h4v4H8z" fill="#00adef" /><path d="M13 14h4v4h-4z" fill="#fbbc09" /></>],
  ['Mail', <><path d="M0 8l12-8 12 8z" fill="#0a4fa0" /><path d="M0 8h24v15H0z" fill="#1e9be6" /><path d="M1 8h22L12 17z" fill="#fff" /><path d="M24 8v15H8z" fill="#35b6f2" /></>],
  ['KerrLab', (
    <g transform="scale(.5)">
      <text x="24" y="10" textAnchor="middle" fontFamily="DejaVu Sans Mono" fontWeight="700" fontSize="10">KERRLAB</text>
      <KerrShape /><path d="M4 15h40L24 29z" fill="#4c5f66" /><path d="M33 20H17m3-3-4 3 4 3" stroke="#f00" strokeWidth="2" fill="none" />
    </g>
  )],
  ['Paint', <PaletteShape />],
];

const Taskbar = ({ compact, short, tray }: { compact?: boolean; short?: boolean; tray?: boolean }) => (
  <Bar>
    <BarButton type="button" aria-label="Start" $w={48}>
      <svg width="16" height="16"><path d="M0 2l7-1v6.500H0zM8 1l8-1v7.500H8zM0 8.500h7V15l-7-1zM8 8.500h8V16l-8-1z" fill="#fff" /></svg>
    </BarButton>
    {compact
      ? <BarButton type="button" aria-label="Search" $w={48}><Lens color="#fff" /></BarButton>
      : <Search><Lens color="#222" /><input aria-label="Search" placeholder="Type here to search" /><Jaguar /></Search>}
    <BarButton type="button" aria-label="Task view" $w={50}>
      <svg width="16" height="16" fill="none" stroke="#fff"><path d="M1 1v3h9V1M1 15v-3h9v3M.500 5.500h10v5H.500zM14.500 0v4M14.500 8v8" /><path d="M13 5h3v2h-3z" fill="#fff" /></svg>
    </BarButton>
    {apps.slice(0, short ? 5 : 6).map(([name, art]) => (
      <BarButton key={name} type="button" aria-label={name} $on={name === 'KerrLab'} $line={name === 'Paint'}>
        <svg width="24" height="24" viewBox="0 0 24 24" aria-hidden="true">{art}</svg>
      </BarButton>
    ))}
    {tray && (
      <Tray>
        <Weather type="button">
          <svg width="26" height="22"><circle cx="17" cy="8" r="7" fill="#f79a1e" /><path d="M6 21c-7 0-7-8-1-9 2-6 11-6 13 0 7 0 8 9 1 9z" fill="#d3e0f5" /></svg>
          <span>-4°C&nbsp; Mostly cloudy</span>
        </Weather>
        <ChevronUp size={16} strokeWidth={1.5} />
        <Camera size={15} strokeWidth={1.3} />
        <Monitor size={16} strokeWidth={1.3} />
        <Volume2 size={16} strokeWidth={1.3} />
        <span>ENG</span>
        <Clock>16:05<br />29/11/2023</Clock>
        <Notice type="button" aria-label="Notifications">
          <svg width="18" height="18"><path d="M1 1h16v11H6l-3 4v-4H1z" fill="#fff" /><path d="M4 4h10M4 7h10" stroke="#1a2540" /></svg>
          <b>2</b>
        </Notice>
      </Tray>
    )}
  </Bar>
);

export default function App() {
  return (
    <>
      <Global />
      <Screens>
        <Screen aria-label="Left display">
          <Desktop><LiveWindow /></Desktop>
          <Taskbar short />
        </Screen>
        <Screen aria-label="Main display">
          <Desktop extra={farIcons}>
            <LedWindow />
            <KerrWindow id="main" rate="10.00" menuOpen />
          </Desktop>
          <Taskbar tray />
        </Screen>
        <Screen aria-label="Right display">
          <Paint />
          <Taskbar compact />
        </Screen>
      </Screens>
    </>
  );
}
